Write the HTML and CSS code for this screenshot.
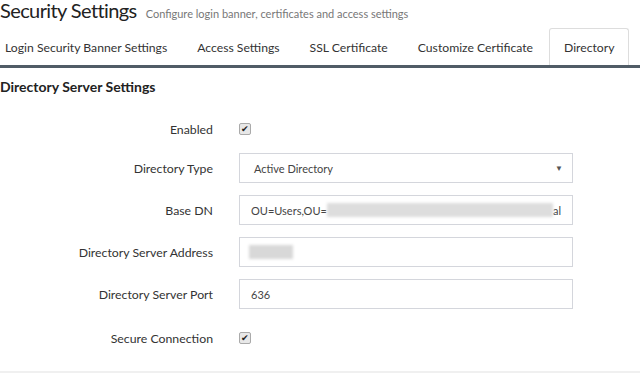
FILE: index.html
```html
<!DOCTYPE html>
<html lang="en">
<head>
    <meta charset="UTF-8">
    <title>Security Settings</title>
    <link rel="stylesheet" href="styles.css">
</head>
<body>
    <div class="page-header">
        <h1>Security Settings</h1>
        <span class="subtitle">Configure login banner, certificates and access settings</span>
    </div>

    <ul class="tabs">
        <li class="tab">Login Security Banner Settings</li>
        <li class="tab">Access Settings</li>
        <li class="tab">SSL Certificate</li>
        <li class="tab">Customize Certificate</li>
        <li class="tab active">Directory</li>
    </ul>

    <div class="section">
        <h2>Directory Server Settings</h2>

        <div class="form-row first">
            <label>Enabled</label>
            <span class="checkbox">&#10004;</span>
        </div>

        <div class="form-row">
            <label>Directory Type</label>
            <div class="field select">
                <span>Active Directory</span>
                <span class="caret">&#9660;</span>
            </div>
        </div>

        <div class="form-row">
            <label>Base DN</label>
            <div class="field">
                <span>OU=Users,OU=</span><span class="redacted wide"></span><span>al</span>
            </div>
        </div>

        <div class="form-row">
            <label>Directory Server Address</label>
            <div class="field">
                <span class="redacted short"></span>
            </div>
        </div>

        <div class="form-row">
            <label>Directory Server Port</label>
            <div class="field">636</div>
        </div>

        <div class="form-row last">
            <label>Secure Connection</label>
            <span class="checkbox">&#10004;</span>
        </div>
    </div>

    <div class="footer"></div>
</body>
</html>
```

FILE: styles.css
```css
body {
    font-family: Lato, "Open Sans", sans-serif;
    color: #333;
    background: white;
    margin: 0;
    width: 640px;
    height: 378px;
    overflow: hidden;
}
.page-header {
    display: flex;
    align-items: baseline;
    white-space: nowrap;
    height: 21px;
}
h1 {
    font-size: 20px;
    line-height: 20px;
    font-weight: normal;
    letter-spacing: -0.6px;
    margin: 0 9px 0 0;
    color: #222;
}
.subtitle {
    font-size: 11px;
    color: #777;
}
.tabs {
    list-style: none;
    margin: 7px 0 0 0;
    padding: 0;
    display: flex;
    border-bottom: 3px solid #505c66;
    height: 37px;
}
.tab {
    flex-shrink: 0;
    white-space: nowrap;
    font-size: 12.2px;
    padding: 12px 15px 0 15px;
    color: #333;
}
.tab:first-child {
    padding-left: 5px;
}
.tab.active {
    border: 1px solid #ddd;
    border-bottom: none;
    border-radius: 3px 3px 0 0;
    padding: 11px 14px 0 14px;
    margin-left: 1px;
}
.section {
    padding-top: 10px;
}
h2 {
    font-size: 14px;
    line-height: 17px;
    font-weight: bold;
    margin: 0 0 19px 0;
    color: #222;
}
.form-row {
    display: flex;
    align-items: center;
    height: 30px;
    margin-bottom: 12px;
}
.form-row.first {
    margin-bottom: 9px;
}
.form-row.last {
    margin-top: 14px;
}
.form-row label {
    width: 213px;
    text-align: right;
    font-size: 12.3px;
    margin-right: 26px;
}
.checkbox {
    width: 10px;
    height: 10px;
    border: 1px solid #aaa;
    border-radius: 2px;
    background: #e8e8e8;
    font-size: 9px;
    line-height: 10px;
    text-align: center;
    color: #222;
}
.field {
    box-sizing: border-box;
    width: 334px;
    height: 30px;
    border: 1px solid #d4d6dc;
    display: flex;
    align-items: center;
    padding: 0 11px;
    font-size: 11px;
    color: #444;
}
.select {
    padding-left: 14px;
    justify-content: space-between;
}
.caret {
    font-size: 8px;
    color: #555;
    margin-right: -2px;
}
.redacted {
    display: inline-block;
    height: 14px;
    background: #ddd;
    filter: blur(1.5px);
}
.redacted.wide {
    width: 234px;
}
.redacted.short {
    width: 44px;
    background: #d8d8d8;
    margin-left: -2px;
}
.footer {
    margin-top: 18px;
    border-top: 2px solid #f0f0f0;
}
```
